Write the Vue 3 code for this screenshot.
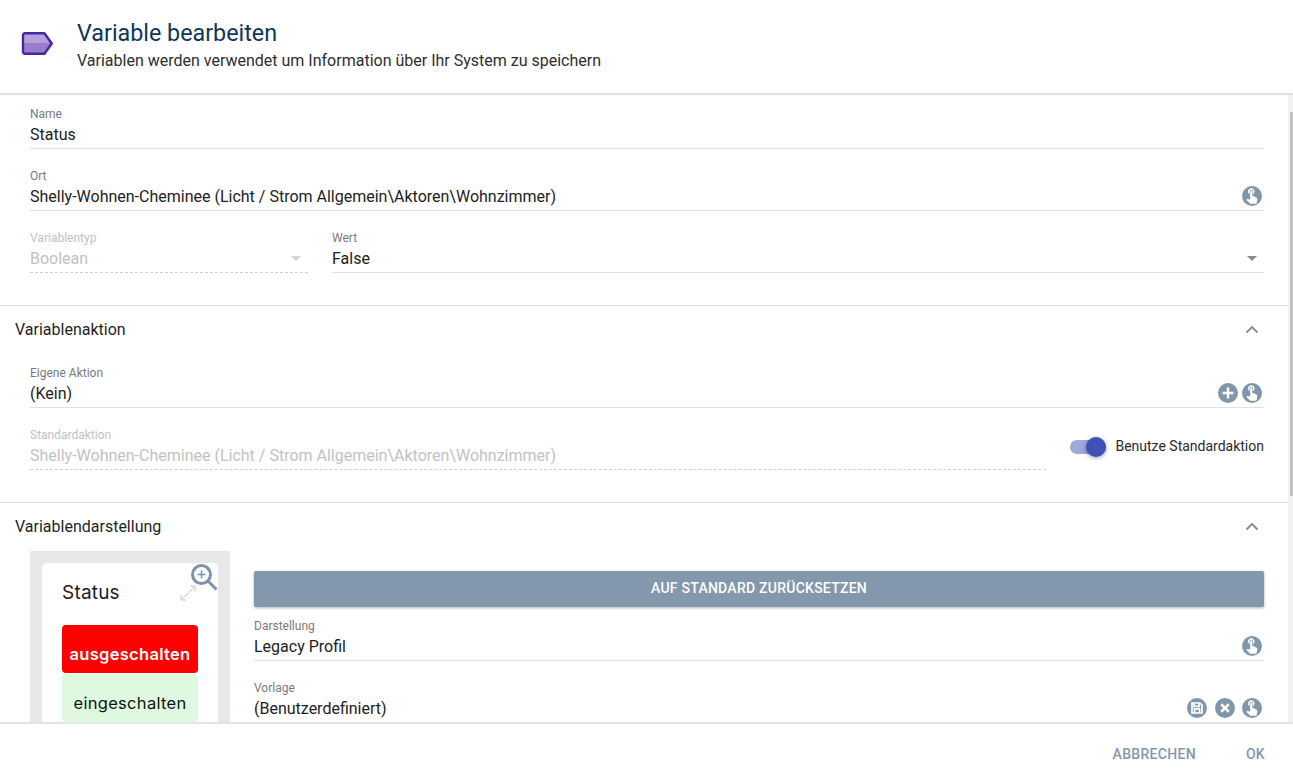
<script setup>
const handPath = 'M9 11.24V7.5C9 6.12 10.12 5 11.5 5S14 6.12 14 7.5v3.74c1.21-.81 2-2.18 2-3.74C16 5.01 13.99 3 11.5 3S7 5.01 7 7.5c0 1.56.79 2.93 2 3.74zm9.84 4.63l-4.54-2.26c-.17-.07-.35-.11-.54-.11H13v-6c0-.83-.67-1.5-1.5-1.5S10 6.67 10 7.5v10.74l-3.43-.72c-.08-.01-.15-.03-.24-.03-.31 0-.59.13-.79.33l-.79.8 4.94 4.94c.27.27.65.44 1.06.44h6.79c.75 0 1.33-.55 1.44-1.28l.75-5.27c.01-.07.02-.14.02-.2 0-.62-.38-1.16-.91-1.38z'
</script>

<template>
  <div class="dialog">
    <header class="head">
      <svg class="logo" width="34" height="28" viewBox="0 0 34 28">
        <path d="M4 3h20.500L32 13.500 24.500 24H4z" fill="#9a7cca" />
        <path d="M4 3h20.500L31 13H4z" fill="#b3a0dc" />
        <path d="M5 3.200h19.400L31.800 13.500 24.400 23.800H5a2 2 0 0 1-2-2V5.200a2 2 0 0 1 2-2z" fill="none" stroke="#4527a0" stroke-width="2.400" stroke-linejoin="round" />
      </svg>
      <div>
        <h1>Variable bearbeiten</h1>
        <p>Variablen werden verwendet um Information über Ihr System zu speichern</p>
      </div>
    </header>

    <div class="middle">
      <main class="scroll">
        <section class="fields first">
          <div class="field">
            <label>Name</label>
            <div class="value">Status</div>
          </div>
          <div class="field">
            <label>Ort</label>
            <div class="value">
              <span class="txt">Shelly-Wohnen-Cheminee (Licht / Strom Allgemein\Aktoren\Wohnzimmer)</span>
              <svg class="ico" viewBox="0 0 24 24"><circle cx="12" cy="12" r="12" /><path :d="handPath" fill="#fff" transform="translate(1 .12) scale(.88)" /></svg>
            </div>
          </div>
          <div class="two">
            <div class="field disabled type">
              <label>Variablentyp</label>
              <div class="value"><span class="txt">Boolean</span><i class="caret"></i></div>
            </div>
            <div class="field grow">
              <label>Wert</label>
              <div class="value"><span class="txt">False</span><i class="caret"></i></div>
            </div>
          </div>
        </section>

        <section class="panel">
          <div class="panel-head">
            <span>Variablenaktion</span>
            <svg width="14" height="9" viewBox="0 0 14 9"><path d="M1.500 7.500 7 2l5.500 5.500" fill="none" stroke="#8a8a8a" stroke-width="1.800" /></svg>
          </div>
          <div class="fields action">
            <div class="field">
              <label>Eigene Aktion</label>
              <div class="value">
                <span class="txt">(Kein)</span>
                <svg class="ico" viewBox="0 0 24 24"><circle cx="12" cy="12" r="12" /><path d="M12 5.500v13M5.500 12h13" stroke="#fff" stroke-width="3" /></svg>
                <svg class="ico" viewBox="0 0 24 24"><circle cx="12" cy="12" r="12" /><path :d="handPath" fill="#fff" transform="translate(1 .12) scale(.88)" /></svg>
              </div>
            </div>
            <div class="std-row">
              <div class="field disabled grow">
                <label>Standardaktion</label>
                <div class="value"><span class="txt">Shelly-Wohnen-Cheminee (Licht / Strom Allgemein\Aktoren\Wohnzimmer)</span></div>
              </div>
              <div class="toggle">
                <span class="track"><span class="knob"></span></span>
                <span class="toggle-label">Benutze Standardaktion</span>
              </div>
            </div>
          </div>
        </section>

        <section class="panel">
          <div class="panel-head">
            <span>Variablendarstellung</span>
            <svg width="14" height="9" viewBox="0 0 14 9"><path d="M1.500 7.500 7 2l5.500 5.500" fill="none" stroke="#8a8a8a" stroke-width="1.800" /></svg>
          </div>
          <div class="visual">
            <div class="preview">
              <div class="card">
                <div class="card-title">Status</div>
                <div class="btn-red">ausgeschalten</div>
                <div class="btn-green">eingeschalten</div>
              </div>
              <svg class="expand" width="18" height="18" viewBox="0 0 18 18">
                <path d="M2 16 16 2M2 16v-5M2 16h5M16 2v5M16 2h-5" fill="none" stroke="#c4c4c4" stroke-width="1" />
              </svg>
              <svg class="zoom" width="28" height="28" viewBox="0 0 28 28">
                <circle cx="11.500" cy="11.500" r="9" fill="#fff" stroke="#7d93a8" stroke-width="3" />
                <path d="M18 18l8.500 8.500" stroke="#7d93a8" stroke-width="3" />
                <path d="M11.500 7.500v8M7.500 11.500h8" stroke="#7d93a8" stroke-width="1.500" />
              </svg>
            </div>
            <div class="visual-fields">
              <button class="reset">AUF STANDARD ZURÜCKSETZEN</button>
              <div class="field">
                <label>Darstellung</label>
                <div class="value">
                  <span class="txt">Legacy Profil</span>
                  <svg class="ico" viewBox="0 0 24 24"><circle cx="12" cy="12" r="12" /><path :d="handPath" fill="#fff" transform="translate(1 .12) scale(.88)" /></svg>
                </div>
              </div>
              <div class="field">
                <label>Vorlage</label>
                <div class="value wide">
                  <span class="txt">(Benutzerdefiniert)</span>
                  <svg class="ico" viewBox="0 0 24 24"><circle cx="12" cy="12" r="12" /><path d="M6 6h9.500L18 8.500V18H6zM8.500 6v4h6V6M9 13h6v5H9z" fill="none" stroke="#fff" stroke-width="2" /></svg>
                  <svg class="ico" viewBox="0 0 24 24"><circle cx="12" cy="12" r="12" /><path d="M7.500 7.500l9 9M16.500 7.500l-9 9" stroke="#fff" stroke-width="3" /></svg>
                  <svg class="ico" viewBox="0 0 24 24"><circle cx="12" cy="12" r="12" /><path :d="handPath" fill="#fff" transform="translate(1 .12) scale(.88)" /></svg>
                </div>
              </div>
            </div>
          </div>
        </section>
      </main>
      <div class="scrollbar"><div class="thumb"></div></div>
    </div>

    <footer class="foot">
      <button>ABBRECHEN</button>
      <button>OK</button>
    </footer>
  </div>
</template>

<style>
html, body { margin: 0; background: #fff; overflow: hidden; }
</style>

<style scoped>
.dialog {
  width: 1293px;
  height: 784px;
  display: flex;
  flex-direction: column;
  font-family: Roboto, "Liberation Sans", sans-serif;
  color: #1f1f1f;
  background: #fff;
  overflow: hidden;
}
.head {
  height: 93px;
  flex: none;
  display: flex;
  align-items: flex-start;
  border-bottom: 2px solid #e0e0e0;
}
.logo { margin: 30px 23px 0 20px; flex: none; }
h1 {
  margin: 18px 0 0;
  font-size: 23.3px;
  line-height: 30px;
  font-weight: 400;
  color: #0f3659;
}
.head p {
  margin: 3px 0 0;
  font-size: 16px;
  line-height: 20px;
  color: #2e2e2e;
}
.middle { flex: 1; min-height: 0; display: flex; }
.scroll { flex: 1; min-width: 0; overflow: hidden; }
.scrollbar { width: 5px; flex: none; background: #f1f1f1; display: flex; justify-content: flex-end; }
.thumb { width: 3px; height: 384px; margin-top: 17px; background: #c1c1c1; }
.fields { padding: 0 24px 0 30px; }
.first { padding-top: 12px; padding-bottom: 12px; }
.field { height: 42px; margin-bottom: 20px; border-bottom: 1px solid #e0e0e0; box-sizing: border-box; }
.field label { display: block; font-size: 12px; line-height: 14px; color: #7a7a7a; }
.value {
  height: 27px;
  display: flex;
  align-items: center;
  gap: 2px;
  font-size: 16px;
  color: #222;
}
.value.wide { gap: 5.500px; }
.txt { flex: 1; white-space: nowrap; }
.ico { width: 20px; height: 20px; flex: none; fill: #8097ab; margin: 0 2px 2px 0; }
.two { display: flex; gap: 24px; }
.type { width: 278px; flex: none; }
.grow { flex: 1; min-width: 0; }
.disabled { border-bottom: 1px dashed #cfcfcf; }
.disabled label, .disabled .value { color: #c2c2c2; }
.caret {
  width: 0; height: 0;
  margin-right: 7px;
  border-left: 5px solid transparent;
  border-right: 5px solid transparent;
  border-top: 5px solid #8a8a8a;
}
.disabled .caret { border-top-color: #d4d4d4; }
.panel { border-top: 1px solid #e0e0e0; }
.panel-head {
  height: 46px;
  padding: 0 34px 0 15px;
  box-sizing: border-box;
  display: flex;
  align-items: center;
  justify-content: space-between;
  font-size: 16px;
  color: #1f1f1f;
}
.panel-head svg { margin-right: -5px; }
.action { padding-top: 14px; padding-bottom: 12px; }
.std-row { display: flex; align-items: center; gap: 24px; }
.toggle { display: flex; align-items: center; gap: 9px; margin-bottom: 26px; }
.track { width: 36px; height: 14px; margin-top: 2px; border-radius: 7px; background: #9fa8da; position: relative; display: block; }
.knob {
  position: absolute;
  right: 0; top: -3px;
  width: 20px; height: 20px;
  border-radius: 50%;
  background: #3f51b5;
  box-shadow: 0 1px 4px rgba(0,0,0,.4);
}
.toggle-label { font-size: 14px; color: #2a2a2a; }
.visual { display: flex; gap: 24px; padding: 2px 24px 0 30px; }
.preview {
  position: relative;
  width: 200px;
  height: 220px;
  flex: none;
  background: #e8e8e8;
  padding: 12px;
  box-sizing: border-box;
}
.card {
  background: #fff;
  border-radius: 5px;
  height: 220px;
  padding: 0 20px;
  font-family: Inter, "Open Sans", sans-serif;
}
.card-title { font-size: 19px; line-height: 24px; padding-top: 18px; height: 44px; color: #1c1c1c; letter-spacing: .2px; }
.btn-red, .btn-green {
  height: 48px;
  border-radius: 4px;
  display: flex;
  align-items: flex-end;
  justify-content: center;
  padding-bottom: 9px;
  box-sizing: border-box;
  font-size: 16.500px;
  letter-spacing: .3px;
  white-space: nowrap;
}
.btn-red { background: #ff0000; color: #fff; font-weight: 600; }
.btn-green { background: #def9df; color: #111; margin-top: 1px; }
.expand { position: absolute; left: 149px; top: 33px; }
.zoom { position: absolute; left: 160px; top: 12px; }
.visual-fields { flex: 1; min-width: 0; padding-top: 20px; }
.reset {
  display: block;
  width: 100%;
  height: 36px;
  border: 0;
  border-radius: 2px;
  background: #8398ad;
  color: #fff;
  font: 500 14px Roboto, sans-serif;
  letter-spacing: .25px;
  box-shadow: 0 1px 3px rgba(0,0,0,.3);
  margin-bottom: 12px;
  padding: 0 0 2px;
}
.foot {
  height: 60px;
  flex: none;
  border-top: 2px solid #e4e4e4;
  display: flex;
  justify-content: flex-end;
  align-items: center;
  gap: 50px;
  padding-right: 28px;
}
.foot button {
  border: 0;
  background: none;
  padding: 0;
  color: #8398ad;
  font: 500 14px Roboto, sans-serif;
  letter-spacing: .3px;
}
</style>
